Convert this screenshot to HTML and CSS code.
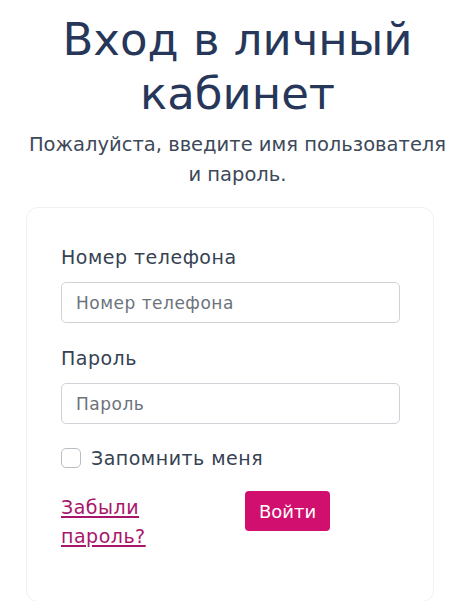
FILE: index.html
```html
<!DOCTYPE html>
<html lang="ru">
<head>
<meta charset="utf-8">
<title>Вход в личный кабинет</title>
<link rel="stylesheet" href="styles.css">
</head>
<body>
<main class="page">
  <h1 class="title">Вход в личный кабинет</h1>
  <p class="subtitle">Пожалуйста, введите имя пользователя и пароль.</p>
  <form class="card">
    <label class="label" for="phone">Номер телефона</label>
    <input class="input" id="phone" type="text" placeholder="Номер телефона">
    <label class="label" for="pass">Пароль</label>
    <input class="input" id="pass" type="password" placeholder="Пароль">
    <label class="remember"><span class="check"></span>Запомнить меня</label>
    <div class="actions">
      <a class="forgot" href="#">Забыли пароль?</a>
      <button class="btn" type="button">Войти</button>
    </div>
  </form>
</main>
</body>
</html>
```

FILE: styles.css
```css
* { box-sizing: border-box; }
html, body { margin: 0; padding: 0; background: #ffffff; }
body {
  font-family: "DejaVu Sans", "Noto Sans", sans-serif;
  color: #2f3b4c;
  overflow: hidden;
}
.page {
  display: flex;
  flex-direction: column;
  align-items: center;
  padding-top: 13px;
}
.title {
  margin: 0;
  width: 410px;
  text-align: center;
  font-size: 45px;
  font-weight: 400;
  line-height: 54px;
  color: #27375a;
}
.subtitle {
  margin: 9px 0 0;
  width: 425px;
  text-align: center;
  font-size: 19.5px;
  line-height: 30px;
  color: #3d4859;
}
.card {
  align-self: flex-start;
  margin: 17px 0 0 26px;
  width: 408px;
  height: 395px;
  border: 1px solid #f1f1f3;
  border-radius: 12px;
  padding: 36px 33px 0 34px;
  display: flex;
  flex-direction: column;
}
.label {
  font-size: 19px;
  letter-spacing: 0.5px;
  line-height: 26px;
  color: #364253;
  margin-bottom: 12px;
}
.input {
  height: 41px;
  border: 1px solid #cfd3d8;
  border-radius: 5px;
  padding: 0 14px;
  font-family: inherit;
  font-size: 17px;
  letter-spacing: 0.5px;
  color: #333;
  margin-bottom: 22px;
}
.input::placeholder { color: #6b737c; }
.remember {
  display: flex;
  align-items: center;
  gap: 10px;
  font-size: 19px;
  letter-spacing: 0.5px;
  line-height: 24px;
  color: #364253;
}
.check {
  width: 20px;
  height: 20px;
  border: 1px solid #b9bec4;
  border-radius: 5px;
  background: #fff;
}
.actions {
  display: grid;
  grid-template-columns: 184px auto;
  align-items: start;
  margin-top: 21px;
}
.forgot {
  width: 110px;
  margin-top: 2px;
  font-size: 19px;
  letter-spacing: 0.5px;
  line-height: 29px;
  color: #a8166a;
  text-decoration: underline;
  text-decoration-thickness: 2px;
  text-underline-offset: 2px;
}
.btn {
  justify-self: start;
  width: 85px;
  height: 40px;
  border: none;
  border-radius: 4px;
  background: #d10f6e;
  color: #fff;
  font-family: inherit;
  font-size: 18px;
  padding: 0;
}
```
